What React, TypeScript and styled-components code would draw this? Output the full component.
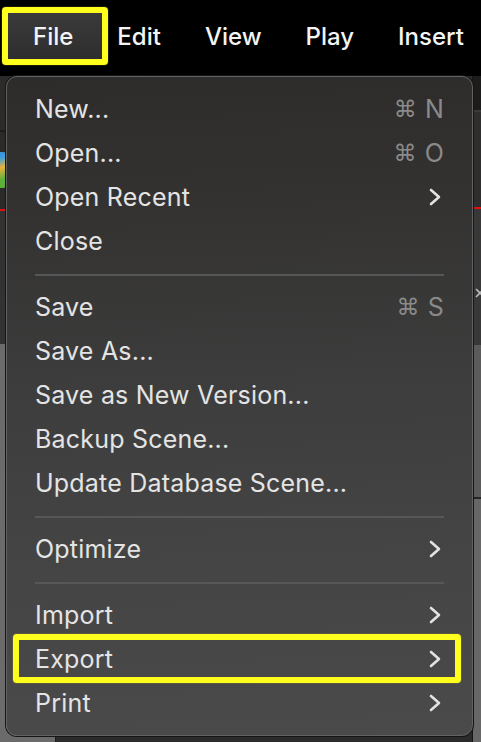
import React from 'react';
import styled, { createGlobalStyle } from 'styled-components';

const GlobalStyle = createGlobalStyle`
  html, body {
    margin: 0;
    padding: 0;
    background: #2a2a2a;
  }
  body {
    font-family: 'Inter', 'Liberation Sans', Arial, sans-serif;
    -webkit-font-smoothing: antialiased;
  }
`;

const Page = styled.div`
  position: relative;
  width: 481px;
  height: 742px;
  overflow: hidden;
  display: flex;
  flex-direction: column;
`;

// Barra de menú superior
const MenuBar = styled.nav`
  height: 76px;
  flex: none;
  background: #000;
  display: flex;
  align-items: center;
  padding-left: 11px;
  box-sizing: border-box;
`;

const BarItem = styled.div<{ $marked?: boolean }>`
  position: relative;
  padding: 0 22px;
  height: 76px;
  line-height: 74px;
  font-size: 24px;
  font-weight: 500;
  color: #f4f4f4;
  z-index: 0;

  ${({ $marked }) =>
    $marked &&
    `
    &::before {
      content: '';
      position: absolute;
      left: -9px;
      right: -13px;
      top: 7px;
      bottom: 11px;
      border: 6px solid #ffff1e;
      border-radius: 4px;
      background: linear-gradient(180deg, #3a3a3a 0%, #2e2e2e 100%);
      box-shadow: 0 0 1px #ffff1e;
      z-index: -1;
    }
  `}
`;

// Fondo de la aplicación detrás del menú
const Workspace = styled.div`
  flex: 1;
  display: flex;
`;

const LeftDock = styled.div`
  width: 55px;
  flex: none;
  display: flex;
  flex-direction: column;
  border-right: 1px solid #1c1c1c;
`;

const DockBlock = styled.div<{ $h?: number; $bg: string; $line?: string }>`
  height: ${({ $h }) => ($h ? `${$h}px` : 'auto')};
  flex: ${({ $h }) => ($h ? 'none' : '1')};
  background: ${({ $bg }) => $bg};
  border-bottom: ${({ $line }) => ($line ? `2px solid ${$line}` : 'none')};
  position: relative;
  overflow: hidden;
`;

const Thumb = styled.div`
  position: absolute;
  left: -30px;
  top: 20px;
  width: 36px;
  height: 36px;
  border-radius: 3px;
  background: linear-gradient(160deg, #3a7bd5 0%, #3aa0e0 35%, #e8b23a 55%, #5fb03a 80%);
`;

const Viewport = styled.div`
  flex: 1;
  background: #2b2b2b;
`;

const RightDock = styled.div`
  width: 8px;
  flex: none;
  display: flex;
  flex-direction: column;
  border-left: 1px solid #151515;
`;

const CloseIcon = styled.svg`
  position: absolute;
  left: 1px;
  top: 78px;
`;

// Menú desplegable
const Dropdown = styled.div`
  position: absolute;
  left: 6px;
  top: 76px;
  width: 467px;
  box-sizing: border-box;
  padding: 11px 0 9px;
  border: 1px solid #626262;
  border-radius: 11px;
  background: linear-gradient(178deg, #2e2c2b 0%, #343332 22%, #3e3e3e 50%, #454545 75%, #4a4a4a 100%);
  box-shadow: 0 0 0 1px #161616;
  z-index: 5;
`;

const Row = styled.div<{ $marked?: boolean }>`
  position: relative;
  height: 44px;
  padding: 0 28px;
  display: flex;
  align-items: center;
  justify-content: space-between;
  font-size: 25px;
  color: #e4e4e4;
  letter-spacing: 0.2px;

  ${({ $marked }) =>
    $marked &&
    `
    &::before {
      content: '';
      position: absolute;
      left: 6px;
      right: 11px;
      top: -4px;
      bottom: -1px;
      border: 6px solid #ffff1e;
      border-radius: 4px;
      box-shadow: 0 0 1px #ffff1e;
    }
  `}
`;

const Label = styled.span`
  position: relative;
  margin-top: -2px;
`;

const Shortcut = styled.span`
  color: #8a8a8a;
  display: flex;
  align-items: center;
  gap: 8px;
  margin-top: -2px;
`;

const Cmd = styled.span`
  font-family: 'DejaVu Sans', sans-serif;
  font-size: 23px;
`;

const Separator = styled.div`
  height: 22px;
  display: flex;
  align-items: center;
  padding: 0 28px;

  &::after {
    content: '';
    flex: 1;
    height: 2px;
    background: #575757;
  }
`;

const Chevron = () => (
  <svg width="14" height="20" viewBox="0 0 14 20" style={{ marginRight: 2, marginTop: -2 }}>
    <polyline
      points="3,3 11,10 3,17"
      fill="none"
      stroke="#e2e2e2"
      strokeWidth="2.6"
      strokeLinecap="round"
      strokeLinejoin="round"
    />
  </svg>
);

type Item =
  | { kind: 'sep' }
  | { kind: 'item'; label: string; key?: string; sub?: boolean; marked?: boolean };

const items: Item[] = [
  { kind: 'item', label: 'New...', key: 'N' },
  { kind: 'item', label: 'Open...', key: 'O' },
  { kind: 'item', label: 'Open Recent', sub: true },
  { kind: 'item', label: 'Close' },
  { kind: 'sep' },
  { kind: 'item', label: 'Save', key: 'S' },
  { kind: 'item', label: 'Save As...' },
  { kind: 'item', label: 'Save as New Version...' },
  { kind: 'item', label: 'Backup Scene...' },
  { kind: 'item', label: 'Update Database Scene...' },
  { kind: 'sep' },
  { kind: 'item', label: 'Optimize', sub: true },
  { kind: 'sep' },
  { kind: 'item', label: 'Import', sub: true },
  { kind: 'item', label: 'Export', sub: true, marked: true },
  { kind: 'item', label: 'Print', sub: true },
];

const barItems = ['File', 'Edit', 'View', 'Play', 'Insert'];

const App: React.FC = () => {
  return (
    <>
      <GlobalStyle />
      <Page>
        <MenuBar>
          {barItems.map((name, i) => (
            <BarItem key={name} $marked={i === 0}>
              {name}
            </BarItem>
          ))}
        </MenuBar>

        <Workspace>
          <LeftDock>
            <DockBlock $h={54} $bg="#2b2b2b" $line="#1d1d1d" />
            <DockBlock $h={77} $bg="#2a2a2a" $line="#e01010">
              <Thumb />
            </DockBlock>
            <DockBlock $h={133} $bg="#323232" />
            <DockBlock $bg="#6b6b6b" />
          </LeftDock>
          <Viewport />
          <RightDock>
            <DockBlock $h={34} $bg="#1c1c1c" $line="#3a3a3a" />
            <DockBlock $h={95} $bg="#2e2e2e" $line="#e01010" />
            <DockBlock $h={136} $bg="#383838">
              <CloseIcon width="12" height="12" viewBox="0 0 12 12">
                <path d="M2 2 L10 10 M10 2 L2 10" stroke="#bbb" strokeWidth="1.6" />
              </CloseIcon>
            </DockBlock>
            <DockBlock $h={152} $bg="#5b5b5b" $line="#262626" />
            <DockBlock $bg="#676767" />
          </RightDock>
        </Workspace>

        <Dropdown>
          {items.map((it, i) =>
            it.kind === 'sep' ? (
              <Separator key={i} />
            ) : (
              <Row key={i} $marked={it.marked}>
                <Label>{it.label}</Label>
                {it.key && (
                  <Shortcut>
                    <Cmd>⌘</Cmd>
                    {it.key}
                  </Shortcut>
                )}
                {it.sub && <Chevron />}
              </Row>
            )
          )}
        </Dropdown>
      </Page>
    </>
  );
};

export default App;
